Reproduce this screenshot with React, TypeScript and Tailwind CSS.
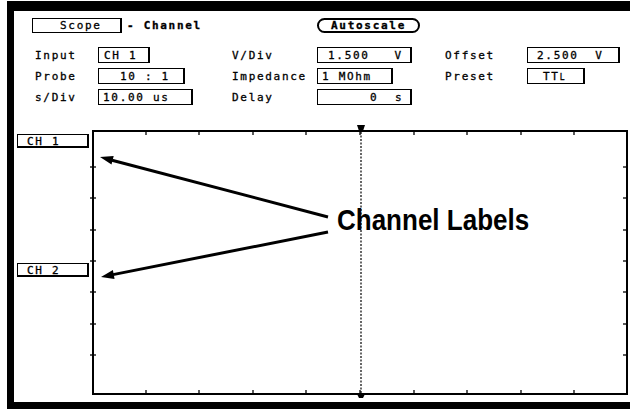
import React from "react";

const F = "font-['DejaVu_Sans_Mono',monospace] text-[11px] tracking-[1.7px] text-black whitespace-pre leading-none [-webkit-text-stroke:0.3px_black]";

function Box({ w, pl, children }: { w: number; pl: number; children: React.ReactNode }) {
  return (
    <div
      className="h-[16px] border border-black border-r-2 flex items-center"
      style={{ width: w, paddingLeft: pl }}
    >
      <span className={F}>{children}</span>
    </div>
  );
}

function Row({
  l1, b1, l2, b2, l3, b3,
}: {
  l1: string; b1: React.ReactNode; l2: string; b2: React.ReactNode; l3?: string; b3?: React.ReactNode;
}) {
  return (
    <div className="flex items-center pl-[21px] h-[16px]">
      <div className={`w-[63px] ${F}`}>{l1}</div>
      <div className="w-[134px]">{b1}</div>
      <div className={`w-[85px] ${F}`}>{l2}</div>
      <div className="w-[128px]">{b2}</div>
      <div className={`w-[82px] ${F}`}>{l3 ?? ""}</div>
      <div>{b3}</div>
    </div>
  );
}

function ChLabel({ text }: { text: string }) {
  return (
    <div className="ml-[3px] w-[72px] h-[14px] border-t border-l border-r-2 border-b-2 border-black overflow-hidden pl-[9px] flex items-end leading-none">
      <span className={`${F} translate-y-[1px]`}>{text}</span>
    </div>
  );
}

function Plot() {
  const W = 536;
  const H = 265;
  const xs = Array.from({ length: 9 }, (_, i) => Math.round(53.6 * (i + 1)));
  const ys = Array.from({ length: 7 }, (_, i) => Math.round(37 + 31.3 * i));
  return (
    <svg width={W} height={H} className="block overflow-visible">
      <line x1={0} y1={1} x2={W} y2={1} stroke="black" strokeWidth={2} />
      <line x1={0} y1={H - 1} x2={W} y2={H - 1} stroke="black" strokeWidth={2} />
      <line x1={1} y1={0} x2={1} y2={H} stroke="black" strokeWidth={2} />
      <line x1={W - 1} y1={0} x2={W - 1} y2={H} stroke="black" strokeWidth={2} />
      {xs.map((x) => (
        <g key={x}>
          <line x1={x} y1={0} x2={x} y2={5} stroke="black" strokeWidth={1.3} />
          <line x1={x} y1={H} x2={x} y2={H - 5} stroke="black" strokeWidth={1.3} />
        </g>
      ))}
      {ys.map((y) => (
        <g key={y}>
          <line x1={-2} y1={y} x2={4} y2={y} stroke="black" strokeWidth={1.3} />
          <line x1={W - 5} y1={y} x2={W} y2={y} stroke="black" strokeWidth={1.3} />
        </g>
      ))}
      <line x1={269} y1={2} x2={269} y2={H - 2} stroke="black" strokeWidth={1.2} strokeDasharray="2 1.5" />
      <polygon points="265,-5 273,-5 271,1 267,1" fill="black" />
      <polygon points="265,264 273,264 271,268 267,268" fill="black" />
    </svg>
  );
}

export default function App() {
  return (
    <div className="relative w-[630px] h-[409px] bg-white overflow-hidden">
      <div className="ml-[7px] mt-[1px] h-[408px] border-l-[7px] border-t-[10px] border-b-[7px] border-black flex flex-col">
        {/* Header */}
        <div className="pt-[7px] flex items-center h-[22px]">
          <div className="w-[303px] flex items-center pl-[18px]">
            <div className="w-[90px] h-[15px] border border-black border-r-2 flex items-center pl-[27px]">
              <span className={F}>Scope</span>
            </div>
            <span className={`${F} font-bold ml-[5px]`}>- Channel</span>
          </div>
          <div className="w-[103px] h-[15px] border-2 border-black rounded-full flex items-center justify-center">
            <span className={`${F} font-bold`}>Autoscale</span>
          </div>
        </div>
        <div className="mt-[14px] flex flex-col gap-[5px]">
          <Row
            l1="Input"
            b1={<Box w={52} pl={5}>CH 1</Box>}
            l2="V/Div"
            b2={<Box w={95} pl={10}>1.500   V</Box>}
            l3="Offset"
            b3={<Box w={93} pl={9}>2.500  V</Box>}
          />
          <Row
            l1="Probe"
            b1={<Box w={87} pl={21}>10 : 1</Box>}
            l2="Impedance"
            b2={<Box w={76} pl={4}>1 MOhm</Box>}
            l3="Preset"
            b3={
              <Box w={58} pl={15}>
                TT<span className="text-[8px] tracking-normal">L</span>
              </Box>
            }
          />
          <Row
            l1="s/Div"
            b1={<Box w={95} pl={4}>10.00 us</Box>}
            l2="Delay"
            b2={<Box w={95} pl={52}>0  s</Box>}
          />
        </div>
        {/* Body */}
        <div className="mt-[25px] flex">
          <div className="w-[78px] flex flex-col pt-[4px]">
            <ChLabel text="CH 1" />
            <div className="h-[115px]" />
            <ChLabel text="CH 2" />
          </div>
          <Plot />
        </div>
      </div>

      {/* Annotation overlay */}
      <svg className="absolute left-0 top-0 pointer-events-none" width={630} height={409}>
        <line x1={328} y1={217} x2={112} y2={160.2} stroke="black" strokeWidth={3} />
        <polygon points="100,157 113.7,155.9 111.5,164.6" fill="black" />
        <line x1={328} y1={232} x2={113} y2={274.6} stroke="black" strokeWidth={3} />
        <polygon points="101,277 112.9,270.1 114.6,278.9" fill="black" />
      </svg>
      <div className="absolute left-[337px] top-[209px] origin-bottom scale-y-[1.15] font-['Liberation_Sans',Arial,sans-serif] font-bold text-[26px] leading-none text-black whitespace-nowrap">
        Channel Labels
      </div>
    </div>
  );
}
